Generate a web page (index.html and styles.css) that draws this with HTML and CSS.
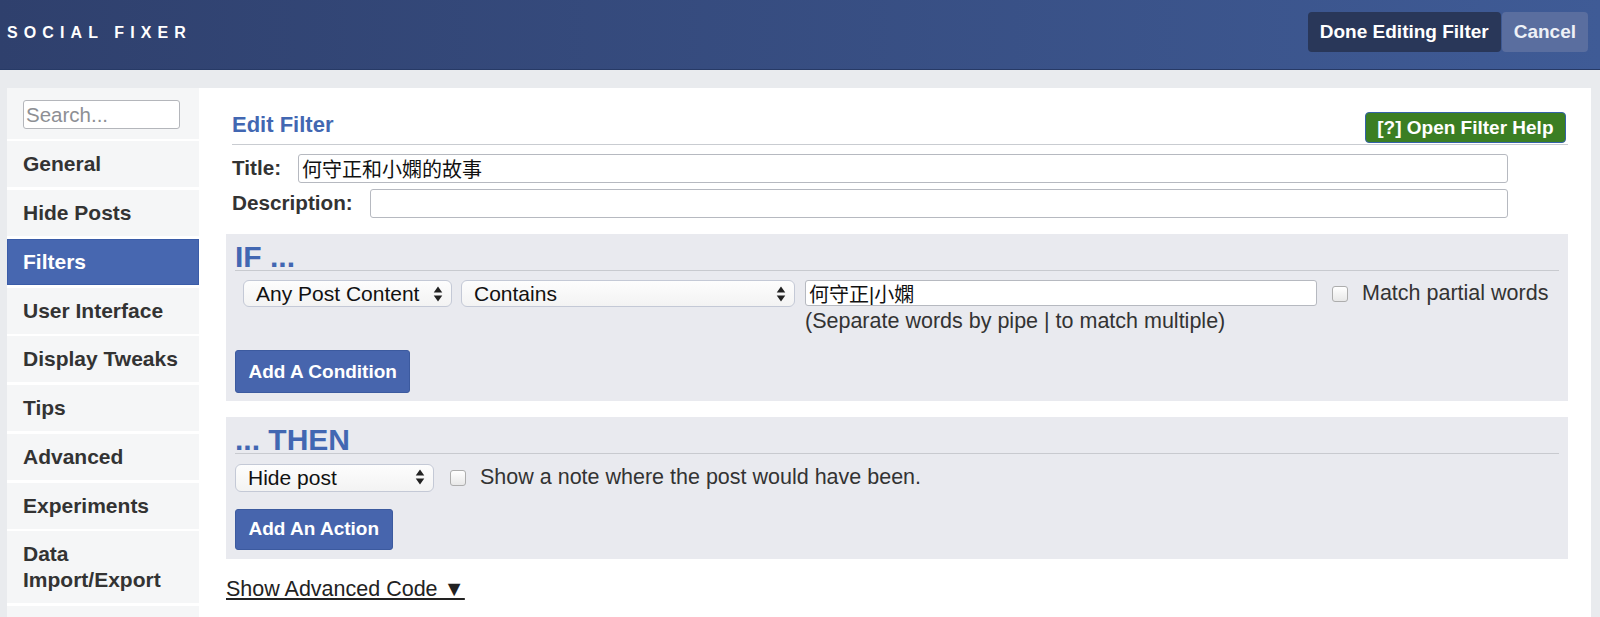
FILE: index.html
```html
<!DOCTYPE html>
<html lang="en">
<head>
<meta charset="UTF-8">
<title>Social Fixer – Edit Filter</title>
<meta name="viewport" content="width=device-width,initial-scale=1">
<link rel="stylesheet" href="styles.css">
</head>
<body>
<header class="topbar">
  <div class="brand">SOCIAL FIXER</div>
  <div class="top-actions">
    <button class="btn-done">Done Editing Filter</button>
    <button class="btn-cancel">Cancel</button>
  </div>
</header>

<div class="shell">
  <!-- settings tabs -->
  <nav class="sidebar">
    <div class="search-box"><input type="text" placeholder="Search..."></div>
    <a class="nav-item">General</a>
    <a class="nav-item">Hide Posts</a>
    <a class="nav-item active">Filters</a>
    <a class="nav-item">User Interface</a>
    <a class="nav-item">Display Tweaks</a>
    <a class="nav-item">Tips</a>
    <a class="nav-item">Advanced</a>
    <a class="nav-item">Experiments</a>
    <a class="nav-item">Data Import/Export</a>
    <a class="nav-item nav-more" aria-hidden="true"></a>
  </nav>

  <main class="content">
    <div class="filter-head">
      <h2>Edit Filter</h2>
      <button class="btn-help">[?] Open Filter Help</button>
    </div>
    <div class="field-row">
      <label>Title:</label>
      <input class="txt" type="text" value="何守正和小嫻的故事">
    </div>
    <div class="field-row">
      <label>Description:</label>
      <input class="txt" type="text">
    </div>

    <!-- conditions -->
    <section class="block">
      <h3>IF ...</h3>
      <div class="cond-row">
        <span class="select sel-field"><select><option>Any Post Content</option></select><svg class="arrows" viewBox="0 0 9 15"><path d="M0.5 6L4.5 0.5L8.5 6Z M0.5 9L4.5 14.5L8.5 9Z"/></svg></span>
        <span class="select sel-op"><select><option>Contains</option></select><svg class="arrows" viewBox="0 0 9 15"><path d="M0.5 6L4.5 0.5L8.5 6Z M0.5 9L4.5 14.5L8.5 9Z"/></svg></span>
        <div class="match-col">
          <input class="txt txt-small" type="text" value="何守正|小嫻">
          <div class="hint">(Separate words by pipe | to match multiple)</div>
        </div>
        <label class="chk"><input type="checkbox"><span>Match partial words</span></label>
      </div>
      <button class="btn-blue btn-cond">Add A Condition</button>
    </section>

    <!-- actions -->
    <section class="block">
      <h3>... THEN</h3>
      <div class="action-row">
        <span class="select sel-action"><select><option>Hide post</option></select><svg class="arrows" viewBox="0 0 9 15"><path d="M0.5 6L4.5 0.5L8.5 6Z M0.5 9L4.5 14.5L8.5 9Z"/></svg></span>
        <label class="chk"><input type="checkbox"><span>Show a note where the post would have been.</span></label>
      </div>
      <button class="btn-blue btn-act">Add An Action</button>
    </section>

    <a class="adv-link">Show Advanced Code ▼</a>
  </main>
</div>
</body>
</html>
```

FILE: styles.css
```css
:root{
  --bg:#e9ebee;--fg:#2b2b2b;--blue:#4267b2;--btn:#4765ad;--box:#e9eaef;--tab:#f5f6f7;
}
*{box-sizing:border-box;margin:0}
body{font-family:"Liberation Sans",Arial,"Noto Sans CJK TC",sans-serif;background:var(--bg);color:var(--fg);overflow:hidden}
button{font-family:inherit;cursor:pointer}

/* — top bar — */
.topbar{height:70px;display:flex;justify-content:space-between;align-items:flex-start;padding:12px 12px 0 7px;background:linear-gradient(to right,#2f406d,#3f5b96);border-bottom:1px solid #273a66}
.brand{color:#fff;font-weight:bold;font-size:16px;letter-spacing:6.1px;line-height:42px}
.top-actions{display:flex;gap:1px}
.top-actions button{height:40px;padding:0 12px;border:0;border-radius:4px;font-size:19px}
.btn-done{background:#293759;color:#fff;font-weight:bold}
.btn-cancel{background:#5a6e9f;color:#eef1f7;font-weight:600;padding:0 13px}

/* — layout — */
.shell{display:flex;margin:18px 9px 0 7px;background:#fff;min-height:620px}
.sidebar{width:192px;flex:none}
.search-box{background:var(--tab);padding:12px 16px 9.5px;height:50.5px}
.search-box input{width:157px;height:29px;border:1.5px solid #b4b6bb;border-radius:3px;font-family:inherit;font-size:20.5px;padding:0 2px;color:#333}
.search-box input::placeholder{color:#8d8f94}
.nav-item{display:block;margin-top:2.75px;padding:10px 16px;line-height:26px;background:var(--tab);color:#333;font-weight:bold;font-size:21px}
.nav-item.active{background:#4767b0;color:#fff;box-shadow:inset 0 0 0 1px #3a5ca8}
.nav-more{height:46px}

.content{flex:1;padding:23px 23px 0 27px}
.filter-head{display:flex;justify-content:space-between;align-items:flex-start;margin-left:6px;border-bottom:1.5px solid #c9ccd1;padding-bottom:1px}
.filter-head h2{color:var(--blue);font-size:22px;line-height:28px}
.btn-help{margin-top:1px;margin-right:2px;height:31px;padding:0 11.5px;background:#3b7e23;border:1.5px solid #3462a9;border-radius:4px;color:#fff;font-size:19px;font-weight:bold}

.field-row{display:flex;align-items:center;margin:6px 60px 0 6px}
.filter-head + .field-row{margin-top:8.5px}
.field-row label{font-weight:bold;font-size:20.7px;margin-right:17px;color:#333}
.txt{flex:1;height:29px;border:1px solid #b6b9c0;border-radius:3px;padding:0 3px;font-family:"Liberation Sans","Noto Sans CJK TC",sans-serif;font-size:20px;color:#111;background:#fff}

/* — IF / THEN blocks — */
.block{background:var(--box);margin-top:16px;padding:0 9px 8px}
.block h3{color:var(--blue);font-size:30px;line-height:26px;padding-top:10px;border-bottom:1.5px solid #c8cacf}
.cond-row{display:flex;align-items:flex-start;margin-top:9.5px}
.select{position:relative;display:inline-block;height:27px;flex:none}
.select select{appearance:none;-webkit-appearance:none;width:100%;height:100%;border:1px solid #c4c9d6;border-radius:6px;background:linear-gradient(#fdfdfd,#f3f3f3);font-family:inherit;font-size:21px;color:#111;padding:0 12px}
.arrows{position:absolute;right:9px;top:5.5px;width:10px;height:16px;fill:#222}
.sel-field{width:209px;margin-left:8px}
.sel-op{width:334px;margin-left:9px}
.match-col{width:512px;margin-left:10px;flex:none}
.txt-small{width:100%;height:26px;display:block}
.hint{font-size:21.5px;line-height:28px;margin-top:1px;color:#333}
.chk{display:flex;align-items:center;font-size:21.5px;color:#333;margin-left:15px;height:27px}
.chk input{appearance:none;-webkit-appearance:none;width:16px;height:16px;border:1px solid #adadad;border-radius:3px;background:linear-gradient(#fff,#e8e8e8);margin:0 14px 0 0;flex:none}
.btn-blue{display:block;margin-top:15px;height:43px;padding:0 12.5px;background:var(--btn);border:1px solid #3c5a9f;border-radius:3px;color:#fff;font-size:19px;font-weight:bold}
.action-row{display:flex;align-items:center;margin-top:9.5px}
.sel-action{width:199px;height:28px}
.action-row .chk{margin-left:16px}
.btn-act{margin-top:17px;height:41px}
.block + .block{padding-bottom:9px}

.adv-link{display:inline-block;margin-top:17px;font-size:21.5px;line-height:26px;color:#222;text-decoration:underline}
```
